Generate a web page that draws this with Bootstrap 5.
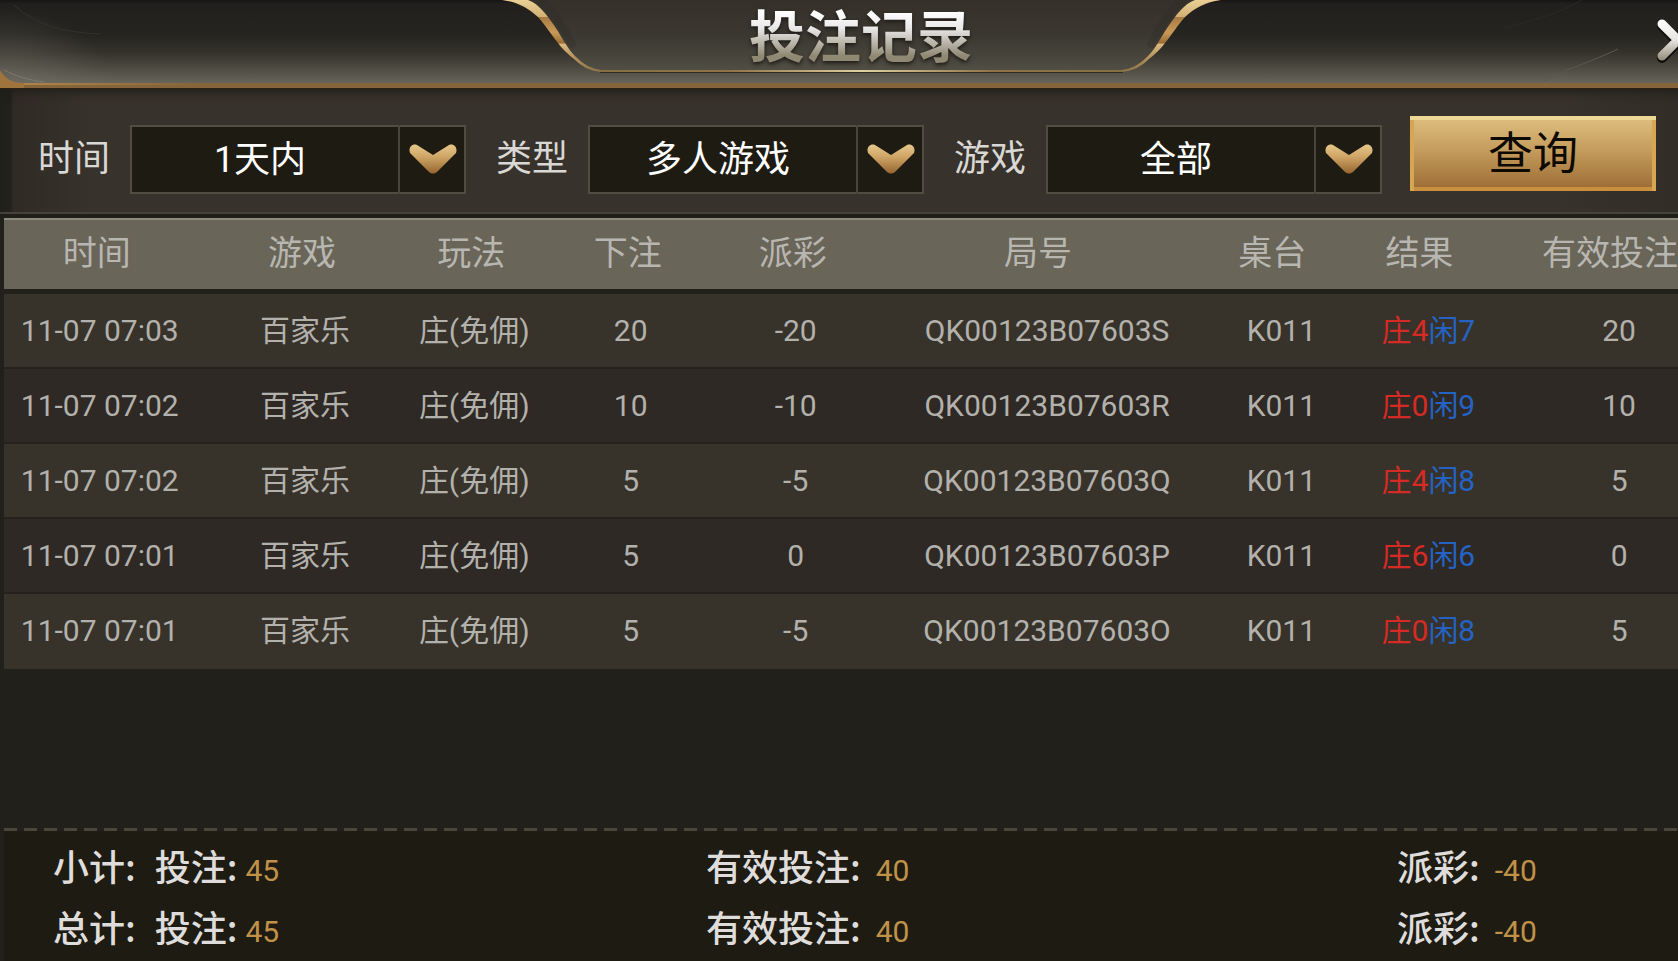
<!DOCTYPE html>
<html lang="zh-CN">
<head>
<meta charset="utf-8">
<meta name="viewport" content="width=device-width, initial-scale=1">
<title>投注记录</title>
<link rel="stylesheet" href="https://cdn.jsdelivr.net/npm/bootstrap@5.3.0/dist/css/bootstrap.min.css">
<style>
  body { background: #21201b; color: #b3b1ac; font-family: Roboto, "Noto Sans CJK SC", sans-serif; overflow: hidden; }
  /* the panel bleeds past the right edge of the window */
  .panel-shell { width: calc(100% + 44px); }

  .title-bar { height: 88px; border-bottom: 5px solid #86653a; background: linear-gradient(#161513 0, #21201e 4px, #252420 35px, #35322b 52px, #4a473f 66px, #67645b 83px); box-shadow: 0 1px 0 #2a2013; }
  .title-frame { width: 723px; height: 83px; left: 50%; margin-left: -361px; top: 0; }
  .corner-art { left: 0; top: 0; width: 200px; height: 88px; }
  .streak-art { right: 0; top: 0; width: 240px; height: 83px; }
  .title-text { font-family: "Noto Sans CJK SC", sans-serif; font-weight: 700; font-size: 56px; line-height: 66px; background: linear-gradient(#fff 12px, #e9e9e9 28px, #8f8872 56px); -webkit-background-clip: text; background-clip: text; color: transparent; filter: drop-shadow(0 2px 2px #1a1814); }
  .close-btn { right: 20px; top: 15px; width: 48px; height: 52px; }

  .filter-bar { padding: 28px 66px 23px 38px; height: 129px; border-bottom: 3px solid #201e19; background: linear-gradient(90deg, #21201b 0, #21201b 10px, #302a25 14px, #37322b 90px, #37322b 1560px, #2f2b25 100%); box-shadow: inset 0 10px 10px -6px #211e18, inset 0 -2px 0 #45423a; gap: 28px; }
  .filter-set { gap: 30px; margin-top: 9px; }
  .filter-item { gap: 20px; flex: 1 1 0; }
  .filter-item label { font-size: 36px; line-height: 68px; color: #d9d8d5; white-space: nowrap; }
  .pick-box { height: 69px; }
  .pick-box select { appearance: none; background: #1e1b13; color: #fff; border: 2px solid #504d42; border-radius: 0; font-size: 36px; text-align: center; padding: 0 76px 0 0; }
  .pick-arrow { right: 0; top: 0; width: 68px; padding-bottom: 2px; border-left: 2px solid #48453b; pointer-events: none; }
  .query-btn { width: 246px; height: 75px; border: 0; border-radius: 0; padding: 2px 0 0; font-size: 45px; line-height: 60px; color: #0d0903; background: linear-gradient(#dfc081, #c59d5d 45%, #9b6933); box-shadow: inset 0 4px 0 #efd795, inset 4px 0 0 #d6a650, inset -4px 0 0 #d6a650, inset 0 -4px 0 #c98f3d; }
  .query-btn:hover { color: #0d0903; }

  .record-table { width: calc(100% - 12px); margin: 1px 8px 0 4px; table-layout: fixed; border-collapse: separate; border-spacing: 0; text-align: center; white-space: nowrap; }
  .record-table th { height: 71px; padding: 0 6px 3px 0; background: #696558; border-top: 2px solid #8e8b7d; font-weight: 400; font-size: 34px; color: #b8b6b0; }
  .record-table th.wide-end { padding-right: 18px; }
  .record-table thead::after { content: ""; display: block; height: 5px; }
  .record-table td { height: 75px; padding: 0 0 1px; font-size: 30px; border-bottom: 2px solid #25221d; background: #37332b; }
  .record-table tr:nth-child(even) td { background: #2e2924; }
  .record-table tr:last-child td { border-bottom-color: #37332b; }
  .banker { color: #d62a25; }
  .player { color: #2463c4; }

  .totals { height: 133px; padding: 7px 0 0 49px; margin-left: 4px; background: repeating-linear-gradient(90deg, #4a473a 0, #4a473a 13px, #21201b 13px, #21201b 20px) 0 0 / 100% 3px no-repeat, #1e1b13; }
  .totals-row { display: grid; grid-template-columns: 653fr 691fr 325fr; height: 61px; align-items: center; white-space: nowrap; }
  .totals-name { font-family: "Noto Sans CJK SC", sans-serif; font-size: 36px; font-weight: 500; line-height: 61px; color: #dedddb; }
  .totals-value { font-size: 30px; color: #c09248; margin-left: 15px; }
  .totals-value.close-in { margin-left: 8px; }
  .totals-lead { margin-right: 19px; }
</style>
</head>
<body>
<div class="panel-shell d-flex flex-column min-vh-100">
  <header class="title-bar position-relative d-flex justify-content-center align-items-start flex-shrink-0">
    <svg class="corner-art position-absolute" viewBox="0 0 200 88" aria-hidden="true">
      <defs>
        <radialGradient id="glow" gradientUnits="userSpaceOnUse" cx="0" cy="0" r="1" gradientTransform="translate(0 83) scale(110 75)"><stop offset="0" stop-color="#77746a" stop-opacity=".45"/><stop offset=".4" stop-color="#77746a" stop-opacity=".3"/><stop offset="1" stop-color="#77746a" stop-opacity="0"/></radialGradient>
        <linearGradient id="lip" x1="0" x2="1"><stop offset="0" stop-color="#b0854b"/><stop offset="1" stop-color="#b0854b" stop-opacity="0"/></linearGradient>
      </defs>
      <rect width="200" height="83" fill="url(#glow)"/>
      <path d="M14 5C35 24 60 32 100 34" fill="none" stroke="#33312c" stroke-width="1"/>
      <path d="M4 70C16 76 28 80 44 82" fill="none" stroke="#7c796f" stroke-width="1"/>
      <rect x="20" y="83" width="180" height="2" fill="url(#lip)"/>
      <path d="M0 70C5 79 12 83 24 83V88H0Z" fill="#a0743d"/>
    </svg>
    <svg class="streak-art position-absolute" viewBox="0 0 240 83" aria-hidden="true">
      <path d="M62 81C75 72 100 66 136 49" fill="none" stroke="#5b584f" stroke-width="1"/>
      <path d="M20 28C50 22 80 12 100 0" fill="none" stroke="#2b2925" stroke-width="1"/>
    </svg>
    <svg class="title-frame position-absolute" viewBox="0 0 723 83" aria-hidden="true">
      <defs>
        <linearGradient id="plate" x1="0" y1="0" x2="0" y2="1"><stop offset="0" stop-color="#35312a"/><stop offset=".5" stop-color="#3b3831"/><stop offset="1" stop-color="#514e45"/></linearGradient>
        <linearGradient id="ribbon" gradientUnits="userSpaceOnUse" x1="0" y1="0" x2="0" y2="72">
          <stop offset="0" stop-color="#ead096"/><stop offset=".23" stop-color="#d3b074"/><stop offset=".24" stop-color="#a87b43"/><stop offset=".45" stop-color="#c89a58"/><stop offset=".6" stop-color="#9a6c35"/><stop offset=".61" stop-color="#dcb97e"/><stop offset=".85" stop-color="#a88855"/><stop offset="1" stop-color="#8a7249"/>
        </linearGradient>
        <linearGradient id="rail" x1="0" x2="1"><stop offset="0" stop-color="#84703f"/><stop offset=".25" stop-color="#8f7448"/><stop offset=".5" stop-color="#e0d0a0"/><stop offset=".75" stop-color="#8f7448"/><stop offset="1" stop-color="#84703f"/></linearGradient>
        <path id="swoop" d="M2 0C18 2 28 8 38 17C46 26 50 33 58 43C63 50 68 54 74 59C82 67 90 71 102 72V70C92 69 84 65 76 57C71 52 69 49 65 43C58 31 54 25 48 17C42 9 36 3 28 0Z"/>
      </defs>
      <path d="M24 0C42 8 50 20 62 43C74 60 84 71 102 71H621C639 71 649 60 661 43C673 20 681 8 699 0Z" fill="url(#plate)"/>
      <path d="M42 1C56 14 62 26 72 44M681 1C667 14 661 26 651 44" fill="none" stroke="#26241f" stroke-width="8" stroke-linecap="round" opacity=".18"/>
      <use href="#swoop" fill="url(#ribbon)"/>
      <use href="#swoop" fill="url(#ribbon)" transform="translate(723 0) scale(-1 1)"/>
      <rect x="100" y="72" width="523" height="1" fill="#2f2c26"/>
      <rect x="100" y="70" width="523" height="2" fill="url(#rail)"/>
    </svg>
    <h1 class="title-text position-relative mb-0">投注记录</h1>
    <button type="button" class="close-btn btn p-0 border-0 position-absolute" aria-label="关闭">
      <svg width="48" height="52" viewBox="0 0 48 52" aria-hidden="true">
        <defs><linearGradient id="steel" gradientUnits="userSpaceOnUse" x1="0" y1="4" x2="0" y2="46"><stop offset="0" stop-color="#fff"/><stop offset=".5" stop-color="#e6e5e2"/><stop offset="1" stop-color="#8f8a74"/></linearGradient></defs>
        <path d="M8 11L40 43M40 11L8 43" stroke="#0f0e0c" stroke-width="10" stroke-linecap="round"/>
        <path d="M8 9L40 41M40 9L8 41" stroke="url(#steel)" stroke-width="9" stroke-linecap="round"/>
      </svg>
    </button>
  </header>

  <form class="filter-bar d-flex align-items-start flex-shrink-0">
    <div class="filter-set d-flex flex-fill">
      <div class="filter-item d-flex">
        <label for="range">时间</label>
        <div class="pick-box position-relative flex-fill">
          <select id="range" class="w-100 h-100"><option>1天内</option></select>
          <span class="pick-arrow position-absolute h-100 d-flex align-items-center justify-content-center">
            <svg width="48" height="30" viewBox="0 0 48 30" aria-hidden="true">
              <defs><linearGradient id="gold" x1="0" y1="0" x2="0" y2="1"><stop offset="0" stop-color="#e6c88a"/><stop offset=".45" stop-color="#cda364"/><stop offset="1" stop-color="#95652f"/></linearGradient></defs>
              <path id="chev" d="M8 1L24 11L40 1C45 -1 49 4 47 9L28 28C25 30 23 30 20 28L1 9C-1 4 3 -1 8 1Z" fill="url(#gold)"/>
            </svg>
          </span>
        </div>
      </div>
      <div class="filter-item d-flex">
        <label for="kind">类型</label>
        <div class="pick-box position-relative flex-fill">
          <select id="kind" class="w-100 h-100"><option>多人游戏</option></select>
          <span class="pick-arrow position-absolute h-100 d-flex align-items-center justify-content-center">
            <svg width="48" height="30" viewBox="0 0 48 30" aria-hidden="true"><use href="#chev"/></svg>
          </span>
        </div>
      </div>
      <div class="filter-item d-flex">
        <label for="game">游戏</label>
        <div class="pick-box position-relative flex-fill">
          <select id="game" class="w-100 h-100"><option>全部</option></select>
          <span class="pick-arrow position-absolute h-100 d-flex align-items-center justify-content-center">
            <svg width="48" height="30" viewBox="0 0 48 30" aria-hidden="true"><use href="#chev"/></svg>
          </span>
        </div>
      </div>
    </div>
    <button type="button" class="query-btn btn flex-shrink-0">查询</button>
  </form>

  <main class="flex-grow-1">
    <table class="record-table">
      <colgroup>
        <col style="width:11.2%"><col style="width:12.8%"><col style="width:7%"><col style="width:11.3%"><col style="width:8%"><col style="width:21.4%"><col style="width:6%"><col style="width:11.2%"><col>
      </colgroup>
      <thead>
        <tr><th>时间</th><th>游戏</th><th>玩法</th><th>下注</th><th>派彩</th><th class="wide-end">局号</th><th class="wide-end">桌台</th><th class="wide-end">结果</th><th class="wide-end">有效投注</th></tr>
      </thead>
      <tbody>
        <tr><td>11-07 07:03</td><td>百家乐</td><td>庄(免佣)</td><td>20</td><td>-20</td><td>QK00123B07603S</td><td>K011</td><td><span class="banker">庄4</span><span class="player">闲7</span></td><td>20</td></tr>
        <tr><td>11-07 07:02</td><td>百家乐</td><td>庄(免佣)</td><td>10</td><td>-10</td><td>QK00123B07603R</td><td>K011</td><td><span class="banker">庄0</span><span class="player">闲9</span></td><td>10</td></tr>
        <tr><td>11-07 07:02</td><td>百家乐</td><td>庄(免佣)</td><td>5</td><td>-5</td><td>QK00123B07603Q</td><td>K011</td><td><span class="banker">庄4</span><span class="player">闲8</span></td><td>5</td></tr>
        <tr><td>11-07 07:01</td><td>百家乐</td><td>庄(免佣)</td><td>5</td><td>0</td><td>QK00123B07603P</td><td>K011</td><td><span class="banker">庄6</span><span class="player">闲6</span></td><td>0</td></tr>
        <tr><td>11-07 07:01</td><td>百家乐</td><td>庄(免佣)</td><td>5</td><td>-5</td><td>QK00123B07603O</td><td>K011</td><td><span class="banker">庄0</span><span class="player">闲8</span></td><td>5</td></tr>
      </tbody>
    </table>
  </main>

  <footer class="totals flex-shrink-0">
    <div class="totals-row">
      <div><span class="totals-name totals-lead">小计:</span><span class="totals-name">投注:</span><span class="totals-value close-in">45</span></div>
      <div><span class="totals-name">有效投注:</span><span class="totals-value">40</span></div>
      <div><span class="totals-name">派彩:</span><span class="totals-value">-40</span></div>
    </div>
    <div class="totals-row">
      <div><span class="totals-name totals-lead">总计:</span><span class="totals-name">投注:</span><span class="totals-value close-in">45</span></div>
      <div><span class="totals-name">有效投注:</span><span class="totals-value">40</span></div>
      <div><span class="totals-name">派彩:</span><span class="totals-value">-40</span></div>
    </div>
  </footer>
</div>
<script src="https://cdn.jsdelivr.net/npm/bootstrap@5.3.0/dist/js/bootstrap.bundle.min.js"></script>
</body>
</html>
